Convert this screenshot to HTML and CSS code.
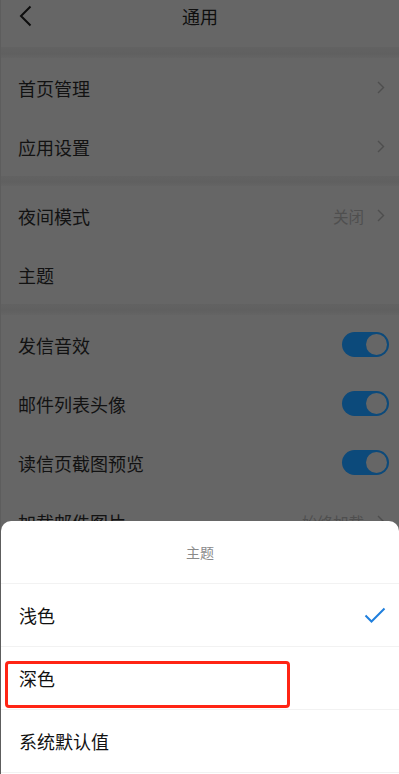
FILE: index.html
```html
<!DOCTYPE html>
<html lang="zh-CN">
<head>
<meta charset="utf-8">
<title>通用</title>
<link rel="stylesheet" href="styles.css">
</head>
<body>
<div class="screen">
  <header class="header">
    <svg class="back" width="14" height="22" viewBox="0 0 14 22"><path d="M11.5 1.5 L2 11 L11.5 20.5" fill="none" stroke="#0d0d0d" stroke-width="2"/></svg>
    <div class="title">通用</div>
  </header>
  <div class="band"></div>
  <section class="group">
    <div class="row"><span class="label">首页管理</span><span class="right"><svg class="chev" width="8" height="13" viewBox="0 0 8 13"><path d="M1 1 L6.5 6.5 L1 12" fill="none" stroke="#4e4e4e" stroke-width="1.4"/></svg></span></div>
    <div class="row"><span class="label">应用设置</span><span class="right"><svg class="chev" width="8" height="13" viewBox="0 0 8 13"><path d="M1 1 L6.5 6.5 L1 12" fill="none" stroke="#4e4e4e" stroke-width="1.4"/></svg></span></div>
  </section>
  <div class="band short"></div>
  <section class="group">
    <div class="row"><span class="label">夜间模式</span><span class="right"><span class="value">关闭</span><svg class="chev" width="8" height="13" viewBox="0 0 8 13"><path d="M1 1 L6.5 6.5 L1 12" fill="none" stroke="#4e4e4e" stroke-width="1.4"/></svg></span></div>
    <div class="row"><span class="label">主题</span></div>
  </section>
  <div class="band"></div>
  <section class="group">
    <div class="row"><span class="label">发信音效</span><span class="toggle"><span class="knob"></span></span></div>
    <div class="row"><span class="label">邮件列表头像</span><span class="toggle"><span class="knob"></span></span></div>
    <div class="row"><span class="label">读信页截图预览</span><span class="toggle"><span class="knob"></span></span></div>
    <div class="row"><span class="label">加载邮件图片</span><span class="right"><span class="value">始终加载</span><svg class="chev" width="8" height="13" viewBox="0 0 8 13"><path d="M1 1 L6.5 6.5 L1 12" fill="none" stroke="#4e4e4e" stroke-width="1.4"/></svg></span></div>
  </section>

  <div class="sheet">
    <div class="sheet-title">主题</div>
    <div class="option"><span>浅色</span><svg class="check" width="22" height="17" viewBox="0 0 22 17"><path d="M1.5 8.5 L7.5 14.5 L20.5 1.5" fill="none" stroke="#1f7fdd" stroke-width="2"/></svg></div>
    <div class="option"><span>深色</span></div>
    <div class="option"><span>系统默认值</span></div>
    <div class="highlight"></div>
  </div>
</div>
</body>
</html>
```

FILE: styles.css
```css
* { box-sizing: border-box; }
html, body {
  margin: 0;
  padding: 0;
  height: 100%;
  overflow: hidden;
}
body {
  font-family: "Noto Sans CJK SC", "Noto Sans", sans-serif;
  background: #666666;
  color: #111111;
}
.screen {
  position: relative;
  width: 399px;
  height: 774px;
  overflow: hidden;
  background: #666666;
  border-left: 1px solid #5d5d5d;
}
.header {
  height: 47px;
  display: flex;
  justify-content: center;
  position: relative;
}
.back {
  position: absolute;
  left: 18px;
  top: 5px;
}
.title {
  font-size: 18px;
  line-height: 32px;
  color: #0f0f0f;
}
.band {
  height: 11px;
  background: linear-gradient(#626262, #606060 60%, #646464);
}
.band.short {
  height: 10px;
}
.group {
  display: flex;
  flex-direction: column;
}
.row {
  height: 59px;
  display: flex;
  align-items: center;
  justify-content: space-between;
  padding: 0 10px 0 17px;
  background: #666666;
}
.label {
  font-size: 18px;
  color: #121212;
}
.right {
  display: flex;
  align-items: center;
  gap: 13px;
  padding-right: 4px;
}
.value {
  font-size: 15.5px;
  color: #4f4f4f;
}
.chev {
  display: block;
}
.toggle {
  width: 47px;
  height: 25px;
  border-radius: 13px;
  background: #0c4a7b;
  display: flex;
  align-items: center;
  justify-content: flex-end;
  padding-right: 2px;
}
.knob {
  width: 21px;
  height: 21px;
  border-radius: 50%;
  background: #666666;
}
.sheet {
  position: absolute;
  left: 0;
  right: 0;
  bottom: 0;
  height: 253px;
  background: #ffffff;
  border-radius: 10px 10px 0 0;
  display: flex;
  flex-direction: column;
}
.sheet-title {
  height: 63px;
  display: flex;
  align-items: center;
  justify-content: center;
  font-size: 14px;
  color: #8a8a8a;
  border-bottom: 1px solid #f2f2f2;
}
.option {
  height: 63px;
  display: flex;
  align-items: center;
  justify-content: space-between;
  padding: 0 13px 0 18px;
  font-size: 18px;
  color: #111111;
  border-bottom: 1px solid #f2f2f2;
}
.option:last-of-type {
  border-bottom: none;
}
.check {
  display: block;
}
.highlight {
  position: absolute;
  left: 4px;
  top: 140px;
  width: 285px;
  height: 47px;
  border: 3px solid #ff2414;
  border-radius: 4px;
}
```
